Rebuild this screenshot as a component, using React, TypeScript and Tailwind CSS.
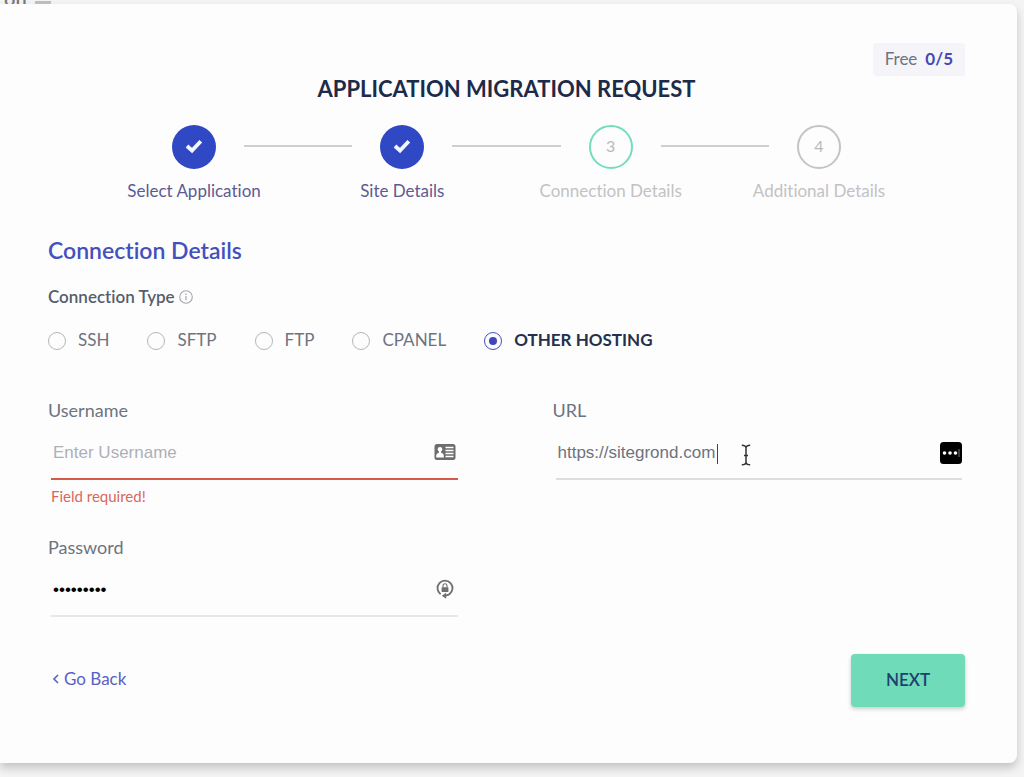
import React from 'react';

type StepState = 'done' | 'current' | 'upcoming';

const steps: { label: string; state: StepState }[] = [
  { label: 'Select Application', state: 'done' },
  { label: 'Site Details', state: 'done' },
  { label: 'Connection Details', state: 'current' },
  { label: 'Additional Details', state: 'upcoming' },
];

const circleStyles: Record<StepState, string> = {
  done: 'bg-[#3048c4]',
  current: 'border-2 border-[#74dcc0]',
  upcoming: 'border-2 border-[#c4c4c4]',
};

const connectionTypes = ['SSH', 'SFTP', 'FTP', 'CPANEL', 'OTHER HOSTING'];

const inputBase =
  "block h-[52px] w-full border-b-2 bg-transparent px-0.5 font-['Liberation_Sans',sans-serif] text-[17px] outline-none";

function CheckIcon() {
  return (
    <svg viewBox="0 0 18 16" className="h-4 w-[18px]" fill="none" stroke="#f4f7ff" strokeWidth="3.8" aria-hidden="true">
      <path d="M2 8 7 12.500 15.800 3.200" />
    </svg>
  );
}

function InfoIcon() {
  return (
    <svg viewBox="0 0 14 14" className="size-3.5" fill="none" stroke="#a3a6ab" aria-hidden="true">
      <circle cx="7" cy="7" r="6.3" strokeWidth="1.1" />
      <path d="M7 6v4.2M7 3.6v1.3" strokeWidth="1.2" />
    </svg>
  );
}

function ContactCardIcon() {
  return (
    <svg viewBox="0 0 22 16" className="h-4 w-[22px]" aria-hidden="true">
      <rect x="0.5" y="0" width="21" height="16" rx="2.5" fill="#6d6d6d" />
      <circle cx="6" cy="5.2" r="2.3" fill="#fff" />
      <path d="M4.9 6.5h2.2v2.3c1.700.4 2.700 1.500 2.700 3.200v1.500H2.200V12c0-1.700 1-2.800 2.700-3.200z" fill="#fff" />
      <path d="M11.500 3.500h8M11.500 6.500h8M11.500 9.500h8M11.500 12.500h8" stroke="#fff" strokeWidth="1.300" />
    </svg>
  );
}

function PasswordKeyIcon() {
  return (
    <svg viewBox="0 0 18 20" className="h-5 w-[18px]" aria-hidden="true">
      <path d="M4.600 15.200A7.500 7.500 0 1 1 13.400 15.200Q11.900 16.400 9 16.700" fill="none" stroke="#6f6f6f" strokeWidth="1.800" />
      <path d="M10.200 13.700v6L5.800 16.700z" fill="#6f6f6f" />
      <rect x="5.600" y="8.200" width="6.800" height="4.800" rx="0.600" fill="#6f6f6f" />
      <path d="M7 8.500V6.800a2 2 0 0 1 4 0v1.700" fill="none" stroke="#6f6f6f" strokeWidth="1.100" />
    </svg>
  );
}

function DotsBadgeIcon() {
  return (
    <svg viewBox="0 0 22 22" className="size-[22px]" aria-hidden="true">
      <rect width="22" height="22" rx="3.500" fill="#000" />
      <circle cx="4.500" cy="11" r="1.800" fill="#fff" />
      <circle cx="10" cy="11" r="1.800" fill="#fff" />
      <circle cx="15.500" cy="11" r="1.800" fill="#fff" />
      <path d="M19 7v8" stroke="#777" strokeWidth="1" />
    </svg>
  );
}

function TextPointer() {
  return (
    <svg viewBox="0 0 10 22" className="h-[22px] w-2.5" fill="none" stroke="#333" strokeWidth="1.500" aria-hidden="true">
      <path d="M0.800 1.200C3 1.200 5 2 5 4v14c0 2-2 2.800-4.200 2.800M9.200 1.200C7 1.200 5 2 5 4M5 18c0 2 2 2.800 4.200 2.800M3 11.500h4" />
    </svg>
  );
}

function Stepper() {
  return (
    <ol className="mx-auto mt-[23px] flex h-[76px] max-w-[669px] items-start">
      {steps.map((step, i) => (
        <React.Fragment key={step.label}>
          {i > 0 && <li aria-hidden="true" className="mx-7 mt-5 h-0.5 flex-1 bg-[#cfcfcf]" />}
          <li className="flex w-11 shrink-0 flex-col items-center">
            <span
              className={`flex size-11 items-center justify-center rounded-full pb-0.5 text-base text-[#b9b9b9] ${circleStyles[step.state]}`}
            >
              {step.state === 'done' ? <CheckIcon /> : i + 1}
            </span>
            <span
              className={`mt-2.5 text-[17px] leading-6 whitespace-nowrap ${
                step.state === 'done' ? 'text-[#5c5a94]' : 'text-[#c2c2c5]'
              }`}
            >
              {step.label}
            </span>
          </li>
        </React.Fragment>
      ))}
    </ol>
  );
}

export default function App() {
  return (
    <div className="min-h-screen bg-[#f4f4f5] pr-[7px] pb-3.5 font-[Lato,sans-serif] text-[17px] text-[#6d7380] [font-variant-ligatures:none]">
      <div className="flex h-1 items-end gap-2 overflow-hidden pl-1 text-[#777]">
        <span className="text-xl leading-3 font-semibold">on</span>
        <span className="h-[3px] w-4 bg-[#bdbdbd]" />
      </div>

      <main className="rounded-r-lg bg-[#fdfdfd] pt-[39px] pr-[52px] pb-14 pl-12 shadow-[0_5px_10px_rgba(0,0,0,0.2)]">
        <div className="flex justify-end">
          <p className="flex h-[33px] items-center gap-2 rounded bg-[#f4f4f9] px-3 pb-0.5">
            Free <strong className="text-[#4549b5]">0/5</strong>
          </p>
        </div>
        <h1 className="text-center text-[22px] leading-[26px] font-bold text-[#1d2b4a]">
          APPLICATION MIGRATION REQUEST
        </h1>

        <Stepper />

        <form onSubmit={(e) => e.preventDefault()}>
          <h2 className="mt-[35px] text-[23px] leading-7 font-semibold text-[#4450bd]">Connection Details</h2>

          <fieldset className="mt-[21px]">
            <legend className="flex items-center gap-1 text-[17px] leading-6 font-semibold text-[#565e6c]">
              Connection Type <InfoIcon />
            </legend>
            <div className="mt-[19px] flex flex-wrap gap-x-[38px]">
              {connectionTypes.map((type) => (
                <label key={type} className="flex items-center gap-3 leading-6">
                  <input
                    type="radio"
                    name="connectionType"
                    defaultChecked={type === 'OTHER HOSTING'}
                    className="peer size-[18px] appearance-none rounded-full border border-[#b5b5b8] bg-clip-content p-1 checked:border-[#4450bd] checked:bg-[#3f48b8]"
                  />
                  <span className="pb-0.5 peer-checked:font-bold peer-checked:text-[#25304c]">{type}</span>
                </label>
              ))}
            </div>
          </fieldset>

          <div className="mt-11 grid grid-cols-2 gap-x-[92px]">
            <div>
              <label htmlFor="username" className="block text-lg leading-6">
                Username
              </label>
              <div className="relative mx-[3px] mt-1.5">
                <input
                  id="username"
                  type="text"
                  placeholder="Enter Username"
                  className={`${inputBase} border-[#d65a4c] placeholder:text-[#adb0b8]`}
                />
                <span className="absolute top-4 right-0.5">
                  <ContactCardIcon />
                </span>
              </div>
              <p className="mx-[3px] mt-1 text-[15px] leading-6 text-[#d9685b]">Field required!</p>
            </div>

            <div>
              <label htmlFor="url" className="block text-lg leading-6">
                URL
              </label>
              <div className="relative mx-[3px] mt-1.5">
                <input
                  id="url"
                  type="text"
                  defaultValue="https://sitegrond.com"
                  className={`${inputBase} border-[#dedee0]`}
                />
                <span className="absolute top-4 left-[161px] h-5 w-px bg-[#444]" />
                <span className="absolute top-4 left-[185px]">
                  <TextPointer />
                </span>
                <span className="absolute top-3.5 right-0">
                  <DotsBadgeIcon />
                </span>
              </div>
            </div>

            <div className="mt-[27px]">
              <label htmlFor="password" className="block text-lg leading-6">
                Password
              </label>
              <div className="relative mx-[3px] mt-1.5">
                <input
                  id="password"
                  type="password"
                  defaultValue="sitepass1"
                  className={`${inputBase} border-[#e8e8ea] text-black`}
                />
                <span className="absolute top-3.5 right-1">
                  <PasswordKeyIcon />
                </span>
              </div>
            </div>
          </div>

          <div className="mt-[37px] flex items-center justify-between">
            <a href="#" className="ml-1 flex items-center gap-1 pb-1 text-[#5a60c4]">
              <svg viewBox="0 0 8 10" className="h-2.5 w-2" fill="none" stroke="#5a60c4" strokeWidth="1.600" aria-hidden="true">
                <path d="M6 1 2 5l4 4" />
              </svg>
              Go Back
            </a>
            <button
              type="submit"
              className="h-[53px] w-[114px] rounded bg-[#6fdbb9] pb-0.5 font-semibold text-[#1f4170] shadow-[0_2px_4px_rgba(0,0,0,0.2)]"
            >
              NEXT
            </button>
          </div>
        </form>
      </main>
    </div>
  );
}
